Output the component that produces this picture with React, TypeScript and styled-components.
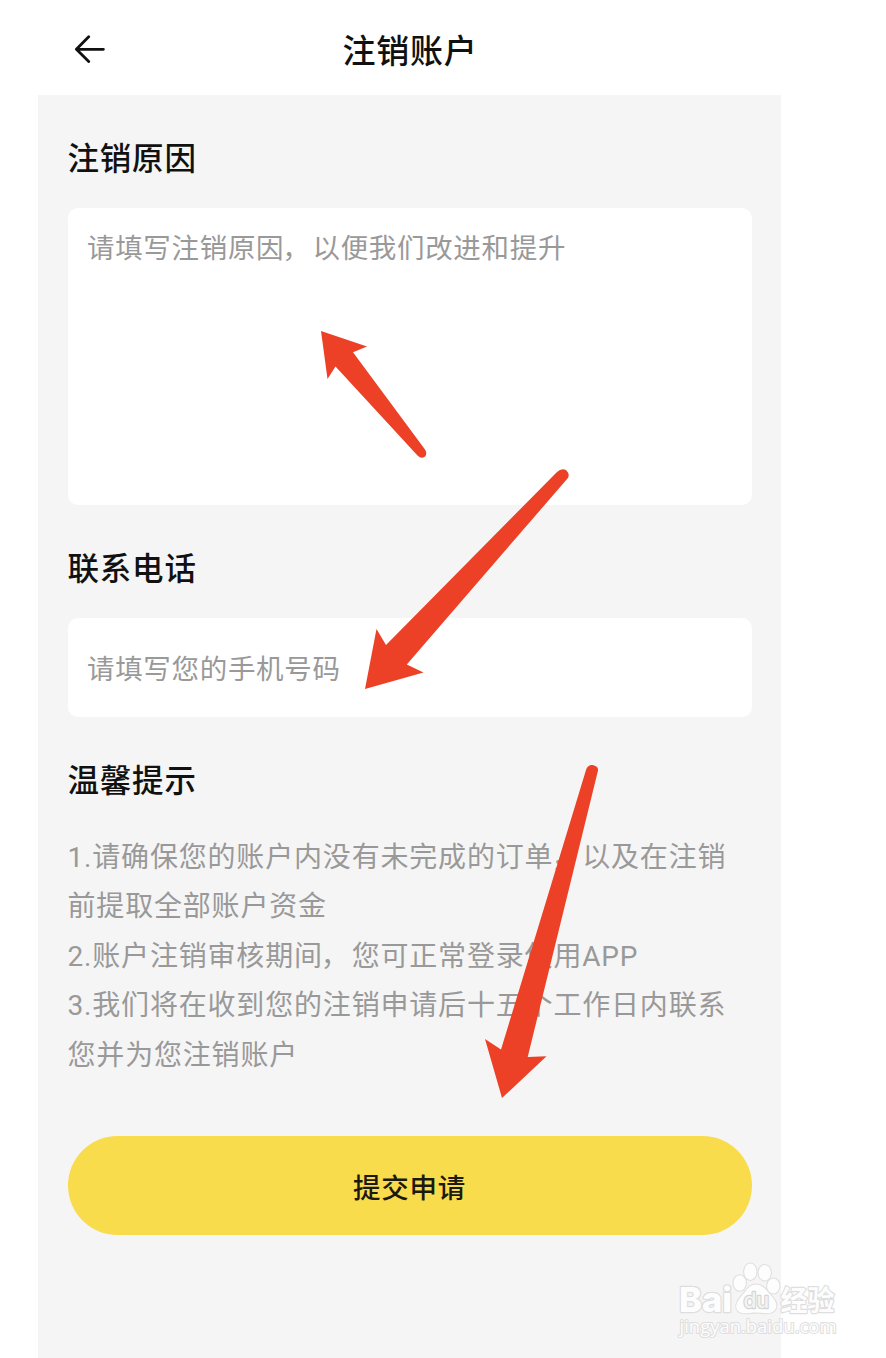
import React from "react";
import styled, { createGlobalStyle } from "styled-components";

const GlobalStyle = createGlobalStyle`
  * { box-sizing: border-box; }
  html, body { margin: 0; padding: 0; background: #fff; }
  body {
    font-family: Roboto, "Noto Sans CJK SC", sans-serif;
    color: #111;
  }
`;

const Page = styled.div`
  position: relative;
  width: 886px;
  height: 1358px;
  padding-left: 38px;
  overflow: hidden;
  background: #fff;
`;

const Phone = styled.main`
  display: flex;
  flex-direction: column;
  width: 743px;
  height: 1358px;
`;

const Header = styled.header`
  display: grid;
  grid-template-columns: 100px 1fr 100px;
  align-items: center;
  height: 95px;
  flex: none;
`;

const BackButton = styled.button`
  display: flex;
  width: 32px;
  height: 28px;
  margin: 2px 0 0 36px;
  padding: 0;
  border: 0;
  background: none;
`;

const Title = styled.h1`
  margin: 9px 0 0;
  padding-left: 1px;
  text-align: center;
  font-size: 33px;
  line-height: 48px;
  font-weight: 500;
  letter-spacing: 0.8px;
`;

const Form = styled.form`
  display: flex;
  flex-direction: column;
  flex: 1;
  padding: 41px 29.5px 0;
  background: #f5f5f5;
`;

const Heading = styled.h2<{ $before?: number; $after: number }>`
  margin: ${(p) => p.$before ?? 0}px 0 ${(p) => p.$after}px;
  font-size: 31.5px;
  line-height: 48px;
  font-weight: 500;
  letter-spacing: 0.8px;
`;

const Field = styled.div<{ $height: number; $top: number }>`
  height: ${(p) => p.$height}px;
  padding: ${(p) => p.$top}px 19.5px 0;
  border-radius: 10px;
  background: #fff;
  color: #999;
  font-size: 27.5px;
  line-height: 40px;
  font-weight: 400;
  letter-spacing: 0.68px;
`;

const Comma = styled.span`
  margin: 0 2px 0 -2px;
`;

const Notes = styled.ol`
  list-style: none;
  margin: 0;
  padding: 0;
  color: #999;
  font-size: 28px;
  line-height: 49.5px;
  font-weight: 400;
  letter-spacing: 0.82px;
`;

const Note = styled.li`
  white-space: nowrap;
`;

const Submit = styled.button`
  height: 99.5px;
  margin: 55.5px 0 0;
  padding: 1px 0 0;
  border: 0;
  border-radius: 50px;
  background: #f8dc4c;
  color: #1c1a10;
  font-family: inherit;
  font-size: 27.5px;
  font-weight: 500;
  letter-spacing: 0.8px;
`;

const Arrows = styled.svg`
  position: absolute;
  inset: 0;
  pointer-events: none;
`;

const Watermark = styled.svg`
  position: absolute;
  left: 670px;
  top: 1255px;
  pointer-events: none;
`;

export default function App() {
  return (
    <>
      <GlobalStyle />
      <Page lang="zh-CN">
        <Phone>
          <Header>
            <BackButton type="button" aria-label="返回">
              <svg width="32" height="28" viewBox="0 0 32 28" fill="none" stroke="#111" strokeWidth="2.8" strokeLinecap="round" strokeLinejoin="round">
                <path d="M14.7 1.8 2.4 14.3 14.7 26.6M2.4 14.3H29.4" />
              </svg>
            </BackButton>
            <Title>注销账户</Title>
          </Header>
          <Form>
            <Heading $after={24}>注销原因</Heading>
            <Field $height={297} $top={21}>请填写注销原因<Comma>，</Comma>以便我们改进和提升</Field>
            <Heading $before={41} $after={24}>联系电话</Heading>
            <Field $height={98.5} $top={32}>请填写您的手机号码</Field>
            <Heading $before={41.5} $after={26.5}>温馨提示</Heading>
            <Notes>
              <Note>1.请确保您的账户内没有未完成的订单<Comma>，</Comma>以及在注销<br />前提取全部账户资金</Note>
              <Note>2.账户注销审核期间<Comma>，</Comma>您可正常登录使用APP</Note>
              <Note>3.我们将在收到您的注销申请后十五个工作日内联系<br />您并为您注销账户</Note>
            </Notes>
            <Submit type="button">提交申请</Submit>
          </Form>
        </Phone>

        <Arrows width="886" height="1358" viewBox="0 0 886 1358" fill="#ec4027">
          <path d="M321 331 367 346.5 353 352.3 425 449.5Q427.5 454 425 456.5 421.5 459.5 417.5 455.5L335.5 366.5 327.5 379Z" />
          <path d="M365 689 376.5 629 386 645 556.5 472.5Q561.5 467.5 566 470 570.5 474.5 567.5 478.5L406.8 664.5 423.5 672.5Z" />
          <path d="M502 1098 485 1039 501 1049.5 586.3 769Q588.5 764.5 592.5 765 598.5 766 598 770.5L527.7 1057 546.5 1056.3Z" />
        </Arrows>

        <Watermark width="180" height="90" viewBox="0 0 180 90" fill="#fdfdfd" stroke="#dedede" strokeWidth="2.4" strokeLinejoin="round" paintOrder="stroke">
          <text x="9" y="57" fontFamily="Inter, sans-serif" fontWeight="800" fontSize="34" textLength="53" lengthAdjust="spacingAndGlyphs">Bai</text>
          <g strokeWidth="2">
            <ellipse cx="69.7" cy="28" rx="6.2" ry="7.8" />
            <ellipse cx="80.3" cy="16.7" rx="6.2" ry="8.3" />
            <ellipse cx="94.7" cy="17.7" rx="6.2" ry="7.8" />
            <ellipse cx="103.3" cy="31" rx="6.2" ry="7.5" />
            <path d="M86 29.5C93 29.5 96 35 101 40.5C107 47 108 52 104 56C100 60 93 57.5 86 57.5C79 57.5 72 60 68 56C64 51 67 46 72 40.5C77 35 79 29.5 86 29.5Z" />
          </g>
          <text x="73.5" y="53" fontFamily="Inter, sans-serif" fontSize="22" fontWeight="500" textLength="25.5" lengthAdjust="spacingAndGlyphs" fill="#f3f3f3" stroke="#d4d4d4">du</text>
          <text x="110.5" y="56" fontFamily="'Noto Sans CJK SC', sans-serif" fontSize="28" fontWeight="700" textLength="54" lengthAdjust="spacingAndGlyphs">经验</text>
          <text x="9.5" y="78" fontFamily="'Open Sans', sans-serif" fontSize="18" fontWeight="500" textLength="157" lengthAdjust="spacingAndGlyphs" strokeWidth="2">jingyan.baidu.com</text>
        </Watermark>
      </Page>
    </>
  );
}
